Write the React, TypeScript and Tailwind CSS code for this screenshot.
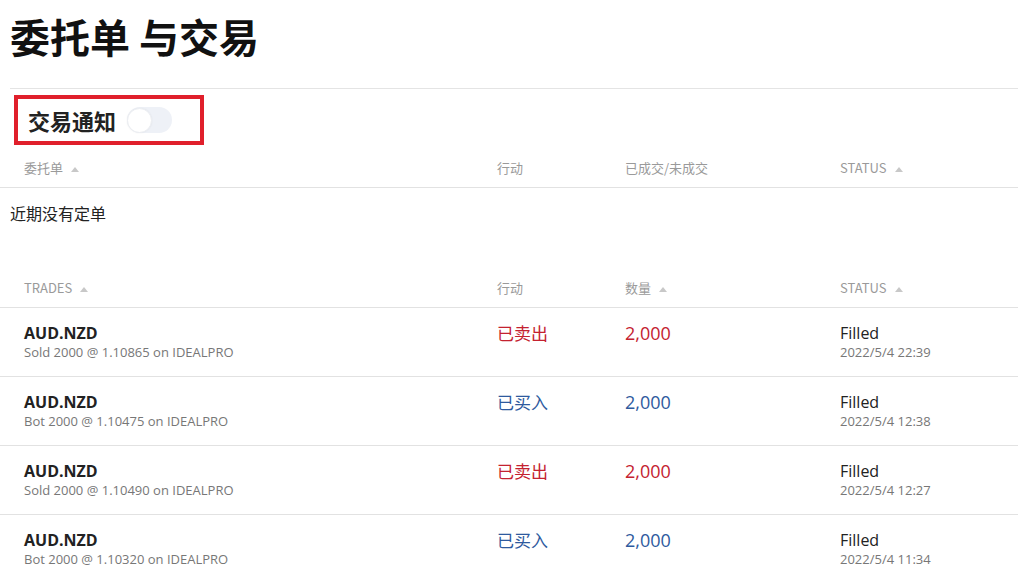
import React from 'react';

const font = { fontFamily: '"Noto Sans CJK SC", "Noto Sans", sans-serif' };
const latin = { fontFamily: '"Open Sans", "Noto Sans CJK SC", sans-serif' };

interface Trade {
  symbol: string;
  detail: string;
  side: 'sell' | 'buy';
  qty: string;
  time: string;
}

const trades: Trade[] = [
  { symbol: 'AUD.NZD', detail: 'Sold 2000 @ 1.10865 on IDEALPRO', side: 'sell', qty: '2,000', time: '2022/5/4 22:39' },
  { symbol: 'AUD.NZD', detail: 'Bot 2000 @ 1.10475 on IDEALPRO', side: 'buy', qty: '2,000', time: '2022/5/4 12:38' },
  { symbol: 'AUD.NZD', detail: 'Sold 2000 @ 1.10490 on IDEALPRO', side: 'sell', qty: '2,000', time: '2022/5/4 12:27' },
  { symbol: 'AUD.NZD', detail: 'Bot 2000 @ 1.10320 on IDEALPRO', side: 'buy', qty: '2,000', time: '2022/5/4 11:34' },
];

const SortArrow = () => (
  <span className="ml-[8px] inline-block w-0 h-0 border-l-[4px] border-r-[4px] border-b-[5px] border-l-transparent border-r-transparent border-b-[#c8c8c8] translate-y-[2px]" />
);

const HeaderRow = ({ cols }: { cols: { label: string; sort?: boolean }[] }) => (
  <div className="flex items-center h-[38px] border-b border-[#e2e2e2] text-[13px] text-[#9a9a9a] pb-[2px]">
    <div className="w-[497px] pl-[24px] flex items-center">{cols[0].label}{cols[0].sort && <SortArrow />}</div>
    <div className="w-[128px] flex items-center">{cols[1].label}{cols[1].sort && <SortArrow />}</div>
    <div className="w-[215px] flex items-center">{cols[2].label}{cols[2].sort && <SortArrow />}</div>
    <div className="flex-1 flex items-center">{cols[3].label}{cols[3].sort && <SortArrow />}</div>
  </div>
);

export default function App() {
  return (
    <div className="w-[1018px] h-[582px] overflow-hidden bg-white text-[#222]" style={font}>
      <h1 className="pl-[10px] pt-[11px] h-[88px] text-[40px] font-bold leading-[50px] text-[#111]">委托单 与交易</h1>
      <div className="ml-[10px] border-t border-[#e4e4e4]" />

      {/* notification toggle */}
      <div className="pl-[14px] pt-[6px]">
        <div className="w-[190px] h-[50px] border-[4px] border-[#e01f2b] flex items-center pl-[10px] gap-[11px]">
          <span className="text-[22px] font-bold text-[#222] leading-none">交易通知</span>
          <div className="w-[45px] h-[26px] rounded-full bg-[#eef1f7] flex items-center">
            <div className="w-[25px] h-[25px] rounded-full bg-white border border-[#eceef2] shadow-[0_0_2px_rgba(0,0,0,0.06)]" />
          </div>
        </div>
      </div>

      {/* orders */}
      <div className="mt-[5px]">
        <HeaderRow cols={[{ label: '委托单', sort: true }, { label: '行动' }, { label: '已成交/未成交' }, { label: 'STATUS', sort: true }]} />
        <div className="pl-[10px] pt-[13px] h-[82px] text-[16px] text-[#222]">近期没有定单</div>
      </div>

      {/* trades */}
      <div>
        <HeaderRow cols={[{ label: 'TRADES', sort: true }, { label: '行动' }, { label: '数量', sort: true }, { label: 'STATUS', sort: true }]} />
        {trades.map((t, i) => {
          const color = t.side === 'sell' ? 'text-[#c42230]' : 'text-[#2e5a9e]';
          return (
            <div key={i} className="flex h-[69px] border-b border-[#e2e2e2] pt-[14px]">
              <div className="w-[497px] pl-[24px]">
                <div className="text-[16px] font-bold leading-[22px] text-[#222]" style={latin}>{t.symbol}</div>
                <div className="text-[13px] leading-[17px] text-[#777]" style={latin}>{t.detail}</div>
              </div>
              <div className={`w-[128px] text-[17px] leading-[22px] ${color}`}>{t.side === 'sell' ? '已卖出' : '已买入'}</div>
              <div className={`w-[215px] text-[18px] leading-[22px] ${color}`} style={latin}>{t.qty}</div>
              <div className="flex-1">
                <div className="text-[16px] leading-[22px] text-[#222]" style={latin}>Filled</div>
                <div className="text-[13px] leading-[17px] text-[#777]" style={latin}>{t.time}</div>
              </div>
            </div>
          );
        })}
      </div>
    </div>
  );
}
